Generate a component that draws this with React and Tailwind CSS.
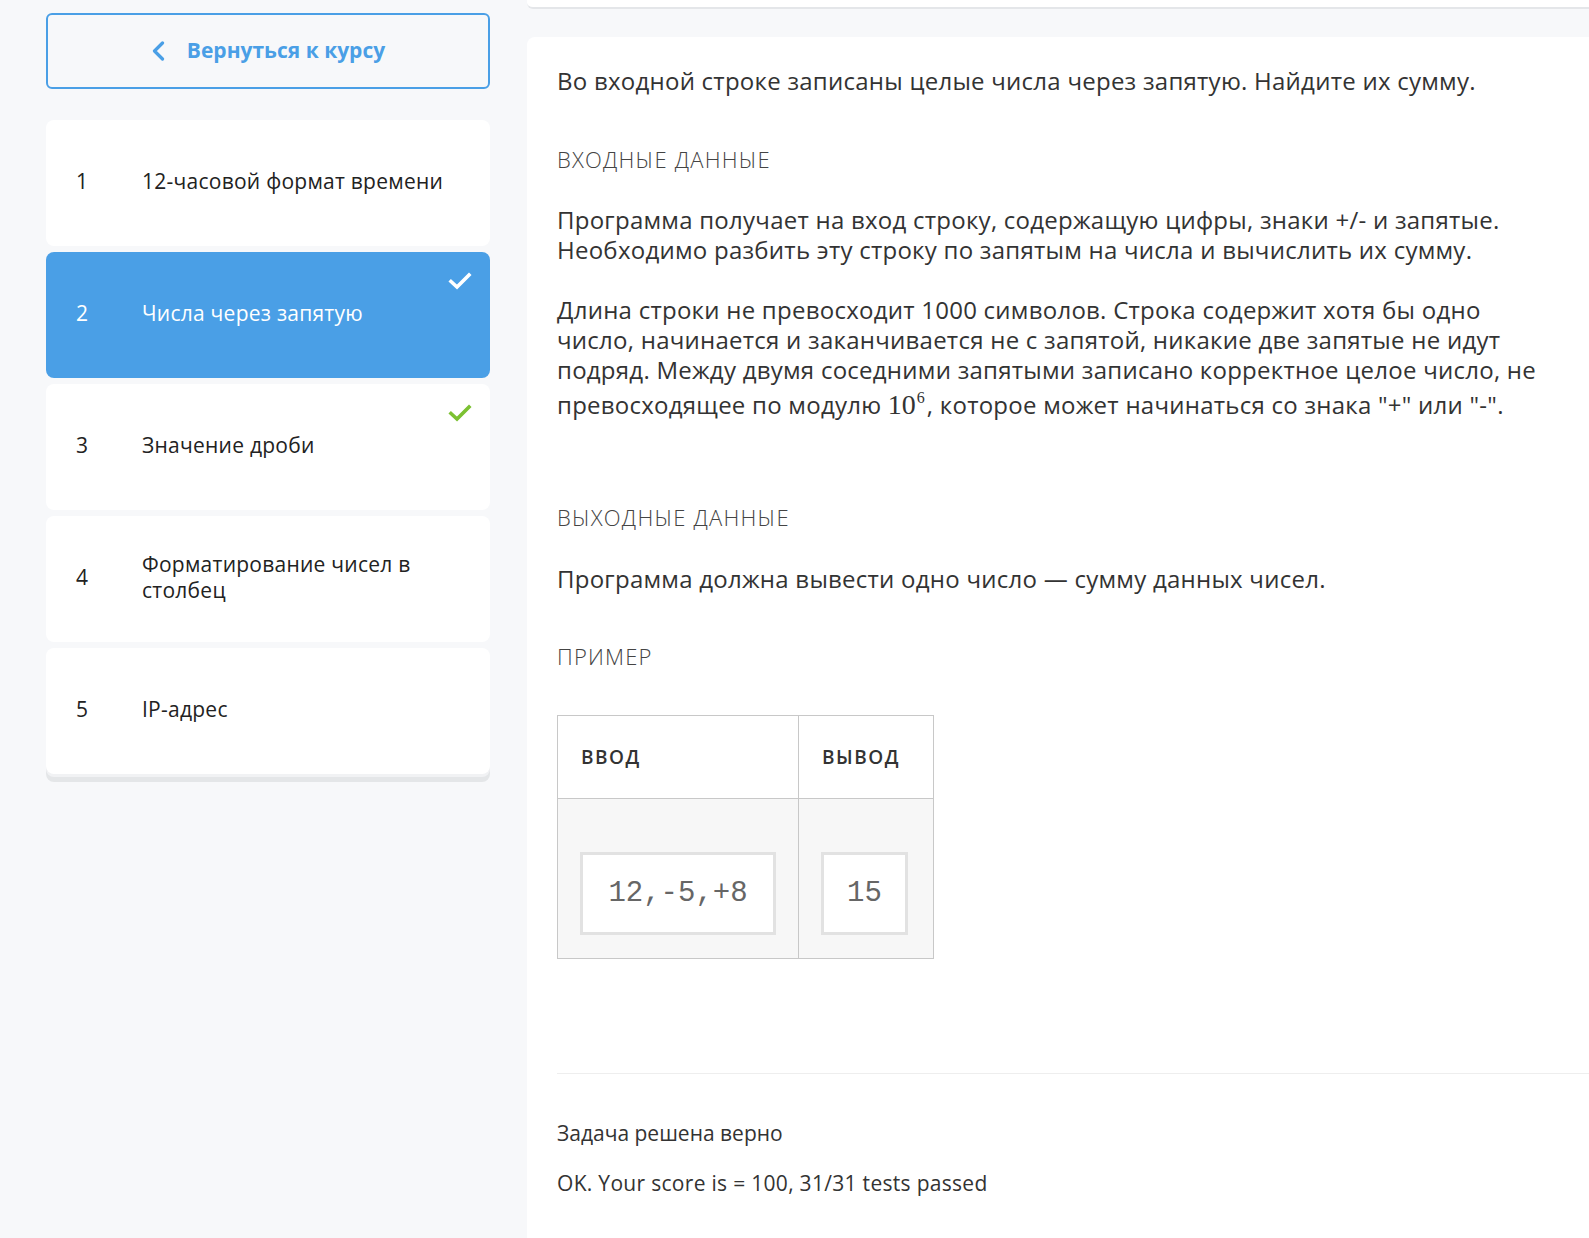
import React from 'react'

const lessons = [
  { n: 1, title: '12-часовой формат времени' },
  { n: 2, title: 'Числа через запятую', active: true, done: true },
  { n: 3, title: 'Значение дроби', done: true },
  { n: 4, title: 'Форматирование чисел в столбец' },
  { n: 5, title: 'IP-адрес' },
]

function Check({ color }) {
  return (
    <svg width="24" height="18" viewBox="0 0 24 18" fill="none">
      <path d="M3 9.5 L9 15 L21 3" stroke={color} strokeWidth="3.6" strokeLinecap="square" strokeLinejoin="miter" />
    </svg>
  )
}

const heading = 'text-[22px] leading-[24px] font-light uppercase tracking-[1.2px] text-[#444]'

export default function App() {
  return (
    <div className="min-h-screen flex bg-[#f7f8fa] font-['Open_Sans',sans-serif] text-[#333]">
      {/* sidebar */}
      <aside className="w-[527px] shrink-0 pl-[46px] pr-[37px] pt-[13px]">
        <button className="w-full h-[76px] rounded-md border-2 border-[#4a9fe6] flex items-center justify-center gap-[22px] text-[#4a9fe6] font-bold text-[21px]">
          <svg width="14" height="20" viewBox="0 0 14 20" fill="none">
            <path d="M11.5 2 L3.5 10 L11.5 18" stroke="#4a9fe6" strokeWidth="3.2" strokeLinecap="round" strokeLinejoin="round" />
          </svg>
          Вернуться к курсу
        </button>

        <ul className="mt-[31px] flex flex-col gap-[6px] rounded-lg shadow-[0_3px_0_#f1f2f4,0_8px_0_#e4e6e8]">
          {lessons.map((l) => (
            <li
              key={l.n}
              className={
                'relative h-[126px] rounded-lg flex items-center pl-[30px] pb-[4px] text-[21px] leading-[26px] tracking-[0.25px] ' +
                (l.active ? 'bg-[#4a9fe6] text-white' : 'bg-white text-[#222]')
              }
            >
              <span className="w-[66px] shrink-0">{l.n}</span>
              <span className="w-[305px]">{l.title}</span>
              {l.done && (
                <span className="absolute top-[20px] right-[18px]">
                  <Check color={l.active ? '#ffffff' : '#7cc132'} />
                </span>
              )}
            </li>
          ))}
        </ul>
      </aside>

      {/* content */}
      <main className="flex-1 flex flex-col min-w-0">
        <div className="h-[9px] bg-white border-b-2 border-[#e4e6e9] rounded-bl-md" />
        <div className="mt-[28px] flex-1 bg-white rounded-tl-lg pl-[30px] pr-[30px] pt-[29px] pb-[40px] text-[24px] leading-[30px] tracking-[0.25px]">
          <p>Во входной строке записаны целые числа через запятую. Найдите их сумму.</p>

          <h3 className={'mt-[51px] ' + heading}>Входные данные</h3>

          <p className="mt-[34px]">
            Программа получает на вход строку, содержащую цифры, знаки +/- и запятые. Необходимо разбить эту строку по запятым на числа и вычислить их сумму.
          </p>

          <p className="mt-[30px]">
            Длина строки не превосходит 1000 символов. Строка содержит хотя бы одно число, начинается и заканчивается не с запятой, никакие две запятые не идут подряд. Между двумя соседними запятыми записано корректное целое число, не превосходящее по модулю{' '}
            <span className="leading-[40px] font-['Liberation_Serif',serif] text-[28px] tracking-normal">10</span>
            <sup className="text-[16px] leading-none top-0 align-[11px] ml-[1px] mr-[2px] font-['Liberation_Serif',serif] tracking-normal">6</sup>
            , которое может начинаться со знака "+" или "-".
          </p>

          <h3 className={'mt-[80px] ' + heading}>Выходные данные</h3>

          <p className="mt-[35px]">Программа должна вывести одно число — сумму данных чисел.</p>

          <h3 className={'mt-[50px] ' + heading}>Пример</h3>

          <table className="mt-[47px] border-collapse border border-[#c8c8c8]">
            <thead>
              <tr>
                <th className="h-[83px] border border-[#c8c8c8] px-[23px] text-left text-[19px] font-semibold tracking-[1.5px] text-[#333]">ВВОД</th>
                <th className="h-[83px] border border-[#c8c8c8] pl-[23px] pr-[25px] text-left text-[19px] font-semibold tracking-[1.5px] text-[#333]">ВЫВОД</th>
              </tr>
            </thead>
            <tbody>
              <tr className="bg-[#f7f7f7]">
                <td className="border border-[#c8c8c8] px-[22px] pt-[53px] pb-[23px] align-top">
                  <pre className="w-[196px] h-[83px] flex items-center justify-center border-[3px] border-[#e2e2e2] bg-white font-['Liberation_Mono',monospace] text-[29px] tracking-normal text-[#666]">12,-5,+8</pre>
                </td>
                <td className="border border-[#c8c8c8] pl-[22px] pr-[25px] pt-[53px] pb-[23px] align-top">
                  <pre className="w-[87px] h-[83px] flex items-center justify-center border-[3px] border-[#e2e2e2] bg-white font-['Liberation_Mono',monospace] text-[29px] tracking-normal text-[#666]">15</pre>
                </td>
              </tr>
            </tbody>
          </table>

          <div className="mt-[114px] -mr-[30px] border-t border-[#eeeeee]" />

          <p className="mt-[44px] text-[21px] tracking-normal">Задача решена верно</p>
          <p className="mt-[20px] text-[21px] tracking-[0.3px]">OK. Your score is = 100, 31/31 tests passed</p>
        </div>
      </main>
    </div>
  )
}
